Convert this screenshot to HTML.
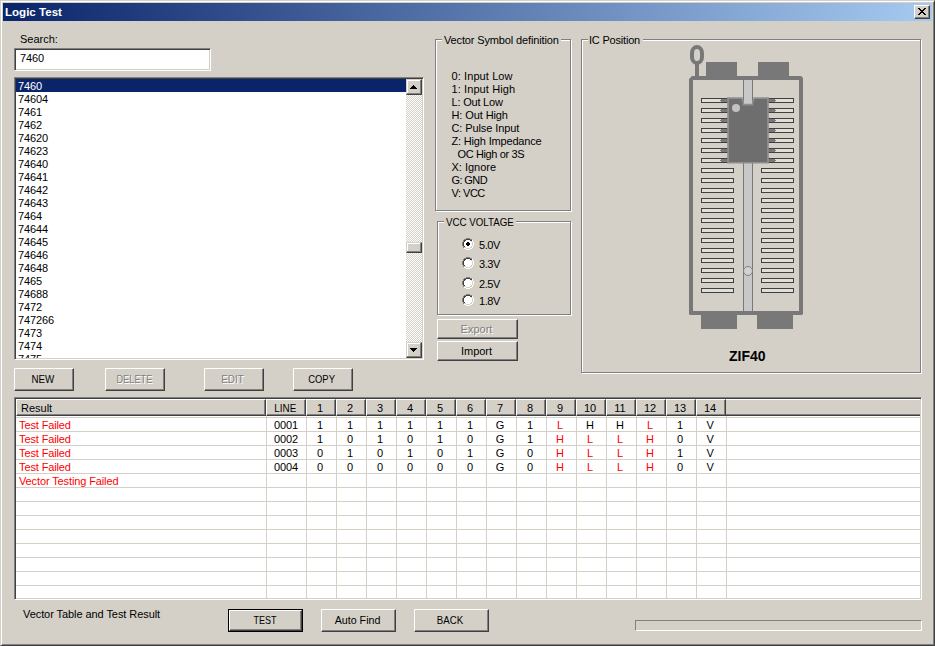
<!DOCTYPE html>
<html>
<head>
<meta charset="utf-8">
<title>Logic Test</title>
<style>
*{box-sizing:border-box;margin:0;padding:0}
html,body{width:935px;height:646px;overflow:hidden;background:#d4d0c8}
body{position:relative;font-family:"Liberation Sans",sans-serif;font-size:11px;color:#000;line-height:13px}
.abs{position:absolute}
#win{position:absolute;left:0;top:0;width:935px;height:646px;background:#d4d0c8;
 border:1px solid;border-color:#d4d0c8 #404040 #404040 #d4d0c8;
 box-shadow:inset 1px 1px 0 #fff, inset -1px -1px 0 #808080}
#title{position:absolute;left:3px;top:3px;width:929px;height:18px;
 background:linear-gradient(to right,#0a246a 0%,#a6caf0 100%);color:#fff;font-weight:bold;font-size:11px;line-height:18px}
#title span{position:absolute;left:2px;top:0;transform:scaleX(1.05);transform-origin:0 50%}
.btn{position:absolute;background:#d4d0c8;border:1px solid;border-color:#fff #404040 #404040 #fff;
 box-shadow:inset -1px -1px 0 #808080, inset 1px 1px 0 #d4d0c8;text-align:center;white-space:nowrap}
.btn.sb{border-color:#d4d0c8 #404040 #404040 #d4d0c8;box-shadow:inset -1px -1px 0 #808080, inset 1px 1px 0 #fff}
.btn.dis{color:#808080;text-shadow:1px 1px 0 #fff}
.sunken{position:absolute;background:#fff;border:1px solid;border-color:#808080 #fff #fff #808080;
 box-shadow:inset 1px 1px 0 #404040, inset -1px -1px 0 #d4d0c8}
.grp{position:absolute;border:1px solid #808080;box-shadow:1px 1px 0 #fff, inset 1px 1px 0 #fff}
.grp .lg{position:absolute;top:-6px;background:#d4d0c8;padding:0 2px;white-space:nowrap;line-height:13px}
#lbi{position:absolute;left:1px;top:1px;width:390px;height:279px;overflow:hidden}
#lbi div{letter-spacing:-0.12px;height:13px;line-height:15px;padding-left:2px;white-space:nowrap;overflow:hidden}
#lbi .sel{background:#0a246a;color:#fff}
#sb{position:absolute;left:391px;top:1px;width:16px;height:279px;
 background-color:#fff;background-image:conic-gradient(#fff 25%,#d4d0c8 0 50%,#fff 0 75%,#d4d0c8 0);background-size:2px 2px}
.hd{line-height:15px;padding-top:1px;padding-right:2px;overflow:hidden}
.hd2{position:absolute;background:#d4d0c8;border-top:1px solid #fff;border-bottom:1px solid #404040;box-shadow:inset 0 -1px 0 #808080}
.hl{position:absolute;left:0;width:904px;height:1px;background:#d4d0c8}
.vl{position:absolute;top:17px;width:1px;height:182px;background:#d4d0c8}
.c{position:absolute;letter-spacing:-0.12px;padding-right:2px;height:14px;line-height:14px;text-align:center;white-space:nowrap}
.red{color:#ff0000}
.sx{display:inline-block}
.t{position:absolute;white-space:nowrap}
</style>
</head>
<body>
<div id="win"></div>
<div id="title"><span>Logic Test</span></div>
<!-- close button -->
<div class="btn" style="left:914px;top:5px;width:16px;height:14px"></div>
<svg class="abs" style="left:918px;top:8px" width="8" height="7" viewBox="0 0 8 7"><path d="M0 0h2v1h1v1h2v-1h1v-1h2v1h-1v1h-1v1h-1v1h1v1h1v1h1v1h-2v-1h-1v-1h-2v1h-1v1h-2v-1h1v-1h1v-1h1v-1h-1v-1h-1v-1h-1z" fill="#000"/></svg>

<div class="t" style="left:20px;top:33px">Search:</div>
<div class="sunken" style="left:14px;top:48px;width:197px;height:23px"></div>
<div class="t" style="left:20px;top:52px;letter-spacing:-0.12px">7460</div>

<!-- listbox -->
<div class="sunken" id="lb" style="left:14px;top:77px;width:410px;height:283px;overflow:hidden">
<div id="lbi"><div class="sel">7460</div><div>74604</div><div>7461</div><div>7462</div><div>74620</div><div>74623</div><div>74640</div><div>74641</div><div>74642</div><div>74643</div><div>7464</div><div>74644</div><div>74645</div><div>74646</div><div>74648</div><div>7465</div><div>74688</div><div>7472</div><div>747266</div><div>7473</div><div>7474</div><div>7475</div></div>
<div id="sb">
 <div class="btn sb" style="left:0;top:0;width:16px;height:16px"></div>
 <svg class="abs" style="left:4px;top:6px" width="7" height="4" viewBox="0 0 7 4"><path d="M3 0h1v1h1v1h1v1h1v1h-7v-1h1v-1h1v-1h1z" fill="#000"/></svg>
 <div class="btn sb" style="left:0;top:163px;width:16px;height:11px"></div>
 <div class="btn sb" style="left:0;top:263px;width:16px;height:16px"></div>
 <svg class="abs" style="left:4px;top:269px" width="7" height="4" viewBox="0 0 7 4"><path d="M0 0h7v1h-1v1h-1v1h-1v1h-1v-1h-1v-1h-1v-1h-1z" fill="#000"/></svg>
</div>
</div>

<!-- buttons row -->
<div class="btn" style="left:14px;top:368px;width:60px;height:23px;line-height:21px;padding-right:3px"><span class="sx" style="transform:scaleX(.89)">NEW</span></div>
<div class="btn dis" style="left:105px;top:368px;width:60px;height:23px;line-height:21px;padding-right:2px"><span class="sx" style="transform:scaleX(.84)">DELETE</span></div>
<div class="btn dis" style="left:204px;top:368px;width:60px;height:23px;line-height:21px;padding-right:3px"><span class="sx" style="transform:scaleX(.9)">EDIT</span></div>
<div class="btn" style="left:293px;top:368px;width:60px;height:23px;line-height:21px;padding-right:2px"><span class="sx" style="transform:scaleX(.855)">COPY</span></div>

<!-- Vector Symbol definition -->
<div class="grp" style="left:435px;top:39px;width:136px;height:172px"><span class="lg" style="left:6px;letter-spacing:-0.14px">Vector Symbol definition</span></div>
<div class="t" style="left:451.5px;top:70px;letter-spacing:0.1px">0: Input Low</div>
<div class="t" style="left:451.5px;top:83px;letter-spacing:0.1px">1: Input High</div>
<div class="t" style="left:451.5px;top:96px;letter-spacing:-0.2px">L: Out Low</div>
<div class="t" style="left:451.5px;top:109px;letter-spacing:-0.1px">H: Out High</div>
<div class="t" style="left:451.5px;top:122px;letter-spacing:-0.1px">C: Pulse Input</div>
<div class="t" style="left:451.5px;top:135px;letter-spacing:-0.17px">Z: High Impedance</div>
<div class="t" style="left:457.5px;top:148px;letter-spacing:-0.37px">OC High or 3S</div>
<div class="t" style="left:451.5px;top:161px;letter-spacing:0px">X: Ignore</div>
<div class="t" style="left:451.5px;top:174px;letter-spacing:-0.6px">G: GND</div>
<div class="t" style="left:451.5px;top:187px;letter-spacing:-0.5px">V: VCC</div>

<!-- VCC VOLTAGE -->
<div class="grp" style="left:437px;top:221px;width:134px;height:94px"><span class="lg" style="left:6px;width:72px"><span class="sx" style="transform:scaleX(.885);transform-origin:0 50%">VCC VOLTAGE</span></span></div>
<svg class="abs" style="left:462px;top:238px" width="12" height="12" viewBox="0 0 12 12" shape-rendering="crispEdges"><rect x="4" y="0" width="4" height="1" fill="#808080"/><rect x="2" y="1" width="2" height="1" fill="#808080"/><rect x="4" y="1" width="4" height="1" fill="#404040"/><rect x="8" y="1" width="2" height="1" fill="#808080"/><rect x="1" y="2" width="1" height="1" fill="#808080"/><rect x="2" y="2" width="2" height="1" fill="#404040"/><rect x="4" y="2" width="4" height="1" fill="#ffffff"/><rect x="8" y="2" width="2" height="1" fill="#404040"/><rect x="10" y="2" width="1" height="1" fill="#ffffff"/><rect x="1" y="3" width="1" height="1" fill="#808080"/><rect x="2" y="3" width="1" height="1" fill="#404040"/><rect x="3" y="3" width="6" height="1" fill="#ffffff"/><rect x="9" y="3" width="1" height="1" fill="#d4d0c8"/><rect x="10" y="3" width="1" height="1" fill="#ffffff"/><rect x="0" y="4" width="1" height="1" fill="#808080"/><rect x="1" y="4" width="1" height="1" fill="#404040"/><rect x="2" y="4" width="8" height="1" fill="#ffffff"/><rect x="10" y="4" width="1" height="1" fill="#d4d0c8"/><rect x="11" y="4" width="1" height="1" fill="#ffffff"/><rect x="0" y="5" width="1" height="1" fill="#808080"/><rect x="1" y="5" width="1" height="1" fill="#404040"/><rect x="2" y="5" width="8" height="1" fill="#ffffff"/><rect x="10" y="5" width="1" height="1" fill="#d4d0c8"/><rect x="11" y="5" width="1" height="1" fill="#ffffff"/><rect x="0" y="6" width="1" height="1" fill="#808080"/><rect x="1" y="6" width="1" height="1" fill="#404040"/><rect x="2" y="6" width="8" height="1" fill="#ffffff"/><rect x="10" y="6" width="1" height="1" fill="#d4d0c8"/><rect x="11" y="6" width="1" height="1" fill="#ffffff"/><rect x="0" y="7" width="1" height="1" fill="#808080"/><rect x="1" y="7" width="1" height="1" fill="#404040"/><rect x="2" y="7" width="8" height="1" fill="#ffffff"/><rect x="10" y="7" width="1" height="1" fill="#d4d0c8"/><rect x="11" y="7" width="1" height="1" fill="#ffffff"/><rect x="1" y="8" width="1" height="1" fill="#808080"/><rect x="2" y="8" width="1" height="1" fill="#404040"/><rect x="3" y="8" width="6" height="1" fill="#ffffff"/><rect x="9" y="8" width="1" height="1" fill="#d4d0c8"/><rect x="10" y="8" width="1" height="1" fill="#ffffff"/><rect x="1" y="9" width="1" height="1" fill="#808080"/><rect x="2" y="9" width="2" height="1" fill="#d4d0c8"/><rect x="4" y="9" width="4" height="1" fill="#ffffff"/><rect x="8" y="9" width="2" height="1" fill="#d4d0c8"/><rect x="10" y="9" width="1" height="1" fill="#ffffff"/><rect x="2" y="10" width="2" height="1" fill="#ffffff"/><rect x="4" y="10" width="4" height="1" fill="#d4d0c8"/><rect x="8" y="10" width="2" height="1" fill="#ffffff"/><rect x="4" y="11" width="4" height="1" fill="#ffffff"/><rect x="5" y="4" width="2" height="4" fill="#000"/><rect x="4" y="5" width="4" height="2" fill="#000"/></svg>
<svg class="abs" style="left:462px;top:257px" width="12" height="12" viewBox="0 0 12 12" shape-rendering="crispEdges"><rect x="4" y="0" width="4" height="1" fill="#808080"/><rect x="2" y="1" width="2" height="1" fill="#808080"/><rect x="4" y="1" width="4" height="1" fill="#404040"/><rect x="8" y="1" width="2" height="1" fill="#808080"/><rect x="1" y="2" width="1" height="1" fill="#808080"/><rect x="2" y="2" width="2" height="1" fill="#404040"/><rect x="4" y="2" width="4" height="1" fill="#ffffff"/><rect x="8" y="2" width="2" height="1" fill="#404040"/><rect x="10" y="2" width="1" height="1" fill="#ffffff"/><rect x="1" y="3" width="1" height="1" fill="#808080"/><rect x="2" y="3" width="1" height="1" fill="#404040"/><rect x="3" y="3" width="6" height="1" fill="#ffffff"/><rect x="9" y="3" width="1" height="1" fill="#d4d0c8"/><rect x="10" y="3" width="1" height="1" fill="#ffffff"/><rect x="0" y="4" width="1" height="1" fill="#808080"/><rect x="1" y="4" width="1" height="1" fill="#404040"/><rect x="2" y="4" width="8" height="1" fill="#ffffff"/><rect x="10" y="4" width="1" height="1" fill="#d4d0c8"/><rect x="11" y="4" width="1" height="1" fill="#ffffff"/><rect x="0" y="5" width="1" height="1" fill="#808080"/><rect x="1" y="5" width="1" height="1" fill="#404040"/><rect x="2" y="5" width="8" height="1" fill="#ffffff"/><rect x="10" y="5" width="1" height="1" fill="#d4d0c8"/><rect x="11" y="5" width="1" height="1" fill="#ffffff"/><rect x="0" y="6" width="1" height="1" fill="#808080"/><rect x="1" y="6" width="1" height="1" fill="#404040"/><rect x="2" y="6" width="8" height="1" fill="#ffffff"/><rect x="10" y="6" width="1" height="1" fill="#d4d0c8"/><rect x="11" y="6" width="1" height="1" fill="#ffffff"/><rect x="0" y="7" width="1" height="1" fill="#808080"/><rect x="1" y="7" width="1" height="1" fill="#404040"/><rect x="2" y="7" width="8" height="1" fill="#ffffff"/><rect x="10" y="7" width="1" height="1" fill="#d4d0c8"/><rect x="11" y="7" width="1" height="1" fill="#ffffff"/><rect x="1" y="8" width="1" height="1" fill="#808080"/><rect x="2" y="8" width="1" height="1" fill="#404040"/><rect x="3" y="8" width="6" height="1" fill="#ffffff"/><rect x="9" y="8" width="1" height="1" fill="#d4d0c8"/><rect x="10" y="8" width="1" height="1" fill="#ffffff"/><rect x="1" y="9" width="1" height="1" fill="#808080"/><rect x="2" y="9" width="2" height="1" fill="#d4d0c8"/><rect x="4" y="9" width="4" height="1" fill="#ffffff"/><rect x="8" y="9" width="2" height="1" fill="#d4d0c8"/><rect x="10" y="9" width="1" height="1" fill="#ffffff"/><rect x="2" y="10" width="2" height="1" fill="#ffffff"/><rect x="4" y="10" width="4" height="1" fill="#d4d0c8"/><rect x="8" y="10" width="2" height="1" fill="#ffffff"/><rect x="4" y="11" width="4" height="1" fill="#ffffff"/></svg>
<svg class="abs" style="left:462px;top:277px" width="12" height="12" viewBox="0 0 12 12" shape-rendering="crispEdges"><rect x="4" y="0" width="4" height="1" fill="#808080"/><rect x="2" y="1" width="2" height="1" fill="#808080"/><rect x="4" y="1" width="4" height="1" fill="#404040"/><rect x="8" y="1" width="2" height="1" fill="#808080"/><rect x="1" y="2" width="1" height="1" fill="#808080"/><rect x="2" y="2" width="2" height="1" fill="#404040"/><rect x="4" y="2" width="4" height="1" fill="#ffffff"/><rect x="8" y="2" width="2" height="1" fill="#404040"/><rect x="10" y="2" width="1" height="1" fill="#ffffff"/><rect x="1" y="3" width="1" height="1" fill="#808080"/><rect x="2" y="3" width="1" height="1" fill="#404040"/><rect x="3" y="3" width="6" height="1" fill="#ffffff"/><rect x="9" y="3" width="1" height="1" fill="#d4d0c8"/><rect x="10" y="3" width="1" height="1" fill="#ffffff"/><rect x="0" y="4" width="1" height="1" fill="#808080"/><rect x="1" y="4" width="1" height="1" fill="#404040"/><rect x="2" y="4" width="8" height="1" fill="#ffffff"/><rect x="10" y="4" width="1" height="1" fill="#d4d0c8"/><rect x="11" y="4" width="1" height="1" fill="#ffffff"/><rect x="0" y="5" width="1" height="1" fill="#808080"/><rect x="1" y="5" width="1" height="1" fill="#404040"/><rect x="2" y="5" width="8" height="1" fill="#ffffff"/><rect x="10" y="5" width="1" height="1" fill="#d4d0c8"/><rect x="11" y="5" width="1" height="1" fill="#ffffff"/><rect x="0" y="6" width="1" height="1" fill="#808080"/><rect x="1" y="6" width="1" height="1" fill="#404040"/><rect x="2" y="6" width="8" height="1" fill="#ffffff"/><rect x="10" y="6" width="1" height="1" fill="#d4d0c8"/><rect x="11" y="6" width="1" height="1" fill="#ffffff"/><rect x="0" y="7" width="1" height="1" fill="#808080"/><rect x="1" y="7" width="1" height="1" fill="#404040"/><rect x="2" y="7" width="8" height="1" fill="#ffffff"/><rect x="10" y="7" width="1" height="1" fill="#d4d0c8"/><rect x="11" y="7" width="1" height="1" fill="#ffffff"/><rect x="1" y="8" width="1" height="1" fill="#808080"/><rect x="2" y="8" width="1" height="1" fill="#404040"/><rect x="3" y="8" width="6" height="1" fill="#ffffff"/><rect x="9" y="8" width="1" height="1" fill="#d4d0c8"/><rect x="10" y="8" width="1" height="1" fill="#ffffff"/><rect x="1" y="9" width="1" height="1" fill="#808080"/><rect x="2" y="9" width="2" height="1" fill="#d4d0c8"/><rect x="4" y="9" width="4" height="1" fill="#ffffff"/><rect x="8" y="9" width="2" height="1" fill="#d4d0c8"/><rect x="10" y="9" width="1" height="1" fill="#ffffff"/><rect x="2" y="10" width="2" height="1" fill="#ffffff"/><rect x="4" y="10" width="4" height="1" fill="#d4d0c8"/><rect x="8" y="10" width="2" height="1" fill="#ffffff"/><rect x="4" y="11" width="4" height="1" fill="#ffffff"/></svg>
<svg class="abs" style="left:462px;top:294px" width="12" height="12" viewBox="0 0 12 12" shape-rendering="crispEdges"><rect x="4" y="0" width="4" height="1" fill="#808080"/><rect x="2" y="1" width="2" height="1" fill="#808080"/><rect x="4" y="1" width="4" height="1" fill="#404040"/><rect x="8" y="1" width="2" height="1" fill="#808080"/><rect x="1" y="2" width="1" height="1" fill="#808080"/><rect x="2" y="2" width="2" height="1" fill="#404040"/><rect x="4" y="2" width="4" height="1" fill="#ffffff"/><rect x="8" y="2" width="2" height="1" fill="#404040"/><rect x="10" y="2" width="1" height="1" fill="#ffffff"/><rect x="1" y="3" width="1" height="1" fill="#808080"/><rect x="2" y="3" width="1" height="1" fill="#404040"/><rect x="3" y="3" width="6" height="1" fill="#ffffff"/><rect x="9" y="3" width="1" height="1" fill="#d4d0c8"/><rect x="10" y="3" width="1" height="1" fill="#ffffff"/><rect x="0" y="4" width="1" height="1" fill="#808080"/><rect x="1" y="4" width="1" height="1" fill="#404040"/><rect x="2" y="4" width="8" height="1" fill="#ffffff"/><rect x="10" y="4" width="1" height="1" fill="#d4d0c8"/><rect x="11" y="4" width="1" height="1" fill="#ffffff"/><rect x="0" y="5" width="1" height="1" fill="#808080"/><rect x="1" y="5" width="1" height="1" fill="#404040"/><rect x="2" y="5" width="8" height="1" fill="#ffffff"/><rect x="10" y="5" width="1" height="1" fill="#d4d0c8"/><rect x="11" y="5" width="1" height="1" fill="#ffffff"/><rect x="0" y="6" width="1" height="1" fill="#808080"/><rect x="1" y="6" width="1" height="1" fill="#404040"/><rect x="2" y="6" width="8" height="1" fill="#ffffff"/><rect x="10" y="6" width="1" height="1" fill="#d4d0c8"/><rect x="11" y="6" width="1" height="1" fill="#ffffff"/><rect x="0" y="7" width="1" height="1" fill="#808080"/><rect x="1" y="7" width="1" height="1" fill="#404040"/><rect x="2" y="7" width="8" height="1" fill="#ffffff"/><rect x="10" y="7" width="1" height="1" fill="#d4d0c8"/><rect x="11" y="7" width="1" height="1" fill="#ffffff"/><rect x="1" y="8" width="1" height="1" fill="#808080"/><rect x="2" y="8" width="1" height="1" fill="#404040"/><rect x="3" y="8" width="6" height="1" fill="#ffffff"/><rect x="9" y="8" width="1" height="1" fill="#d4d0c8"/><rect x="10" y="8" width="1" height="1" fill="#ffffff"/><rect x="1" y="9" width="1" height="1" fill="#808080"/><rect x="2" y="9" width="2" height="1" fill="#d4d0c8"/><rect x="4" y="9" width="4" height="1" fill="#ffffff"/><rect x="8" y="9" width="2" height="1" fill="#d4d0c8"/><rect x="10" y="9" width="1" height="1" fill="#ffffff"/><rect x="2" y="10" width="2" height="1" fill="#ffffff"/><rect x="4" y="10" width="4" height="1" fill="#d4d0c8"/><rect x="8" y="10" width="2" height="1" fill="#ffffff"/><rect x="4" y="11" width="4" height="1" fill="#ffffff"/></svg>
<div class="t" style="left:479px;top:239px;letter-spacing:-0.4px">5.0V</div>
<div class="t" style="left:479px;top:258px;letter-spacing:-0.4px">3.3V</div>
<div class="t" style="left:479px;top:278px;letter-spacing:-0.4px">2.5V</div>
<div class="t" style="left:479px;top:295px;letter-spacing:-0.4px">1.8V</div>
<div class="btn dis" style="left:437px;top:319px;width:81px;height:20px;line-height:18px;padding-right:2px">Export</div>
<div class="btn" style="left:437px;top:341px;width:81px;height:20px;line-height:18px;padding-right:2px">Import</div>

<!-- IC Position -->
<div class="grp" style="left:581px;top:39px;width:340px;height:334px"><span class="lg" style="left:6px;padding:0 3px 0 1px;letter-spacing:-0.2px">IC Position</span></div>
<svg class="abs" style="left:680px;top:40px" width="140" height="300" viewBox="680 40 140 300">
<rect x="692" y="47" width="10" height="16" rx="5" ry="6" fill="none" stroke="#787878" stroke-width="4"/>
<g shape-rendering="crispEdges">
<rect x="695" y="64" width="4" height="13" fill="#787878"/>
<rect x="706" y="62" width="31" height="14" fill="#787878"/>
<rect x="758" y="62" width="31" height="14" fill="#787878"/>
<rect x="701" y="315" width="36" height="14" fill="#787878"/>
<rect x="757" y="315" width="36" height="14" fill="#787878"/>
</g>
<path fill-rule="evenodd" fill="#787878" d="M692 76H801L803 78V314L802 315H690L689 314V79ZM693 80V311H799V80Z"/>
<g shape-rendering="crispEdges">
<rect x="743" y="80" width="10" height="231" fill="#787878"/>
<rect x="744" y="80" width="8" height="231" fill="#c8c8c8"/>
<rect x="701.5" y="98.5" width="32" height="4" fill="#e1ded8" stroke="#404040" stroke-width="1"/>
<rect x="761.5" y="98.5" width="32" height="4" fill="#e1ded8" stroke="#404040" stroke-width="1"/>
<rect x="701.5" y="108.5" width="32" height="4" fill="#e1ded8" stroke="#404040" stroke-width="1"/>
<rect x="761.5" y="108.5" width="32" height="4" fill="#e1ded8" stroke="#404040" stroke-width="1"/>
<rect x="701.5" y="118.5" width="32" height="4" fill="#e1ded8" stroke="#404040" stroke-width="1"/>
<rect x="761.5" y="118.5" width="32" height="4" fill="#e1ded8" stroke="#404040" stroke-width="1"/>
<rect x="701.5" y="128.5" width="32" height="4" fill="#e1ded8" stroke="#404040" stroke-width="1"/>
<rect x="761.5" y="128.5" width="32" height="4" fill="#e1ded8" stroke="#404040" stroke-width="1"/>
<rect x="701.5" y="138.5" width="32" height="4" fill="#e1ded8" stroke="#404040" stroke-width="1"/>
<rect x="761.5" y="138.5" width="32" height="4" fill="#e1ded8" stroke="#404040" stroke-width="1"/>
<rect x="701.5" y="148.5" width="32" height="4" fill="#e1ded8" stroke="#404040" stroke-width="1"/>
<rect x="761.5" y="148.5" width="32" height="4" fill="#e1ded8" stroke="#404040" stroke-width="1"/>
<rect x="701.5" y="158.5" width="32" height="4" fill="#e1ded8" stroke="#404040" stroke-width="1"/>
<rect x="761.5" y="158.5" width="32" height="4" fill="#e1ded8" stroke="#404040" stroke-width="1"/>
<rect x="701.5" y="168.5" width="32" height="4" fill="#e1ded8" stroke="#404040" stroke-width="1"/>
<rect x="761.5" y="168.5" width="32" height="4" fill="#e1ded8" stroke="#404040" stroke-width="1"/>
<rect x="701.5" y="178.5" width="32" height="4" fill="#e1ded8" stroke="#404040" stroke-width="1"/>
<rect x="761.5" y="178.5" width="32" height="4" fill="#e1ded8" stroke="#404040" stroke-width="1"/>
<rect x="701.5" y="188.5" width="32" height="4" fill="#e1ded8" stroke="#404040" stroke-width="1"/>
<rect x="761.5" y="188.5" width="32" height="4" fill="#e1ded8" stroke="#404040" stroke-width="1"/>
<rect x="701.5" y="198.5" width="32" height="4" fill="#e1ded8" stroke="#404040" stroke-width="1"/>
<rect x="761.5" y="198.5" width="32" height="4" fill="#e1ded8" stroke="#404040" stroke-width="1"/>
<rect x="701.5" y="208.5" width="32" height="4" fill="#e1ded8" stroke="#404040" stroke-width="1"/>
<rect x="761.5" y="208.5" width="32" height="4" fill="#e1ded8" stroke="#404040" stroke-width="1"/>
<rect x="701.5" y="218.5" width="32" height="4" fill="#e1ded8" stroke="#404040" stroke-width="1"/>
<rect x="761.5" y="218.5" width="32" height="4" fill="#e1ded8" stroke="#404040" stroke-width="1"/>
<rect x="701.5" y="228.5" width="32" height="4" fill="#e1ded8" stroke="#404040" stroke-width="1"/>
<rect x="761.5" y="228.5" width="32" height="4" fill="#e1ded8" stroke="#404040" stroke-width="1"/>
<rect x="701.5" y="238.5" width="32" height="4" fill="#e1ded8" stroke="#404040" stroke-width="1"/>
<rect x="761.5" y="238.5" width="32" height="4" fill="#e1ded8" stroke="#404040" stroke-width="1"/>
<rect x="701.5" y="248.5" width="32" height="4" fill="#e1ded8" stroke="#404040" stroke-width="1"/>
<rect x="761.5" y="248.5" width="32" height="4" fill="#e1ded8" stroke="#404040" stroke-width="1"/>
<rect x="701.5" y="258.5" width="32" height="4" fill="#e1ded8" stroke="#404040" stroke-width="1"/>
<rect x="761.5" y="258.5" width="32" height="4" fill="#e1ded8" stroke="#404040" stroke-width="1"/>
<rect x="701.5" y="268.5" width="32" height="4" fill="#e1ded8" stroke="#404040" stroke-width="1"/>
<rect x="761.5" y="268.5" width="32" height="4" fill="#e1ded8" stroke="#404040" stroke-width="1"/>
<rect x="701.5" y="278.5" width="32" height="4" fill="#e1ded8" stroke="#404040" stroke-width="1"/>
<rect x="761.5" y="278.5" width="32" height="4" fill="#e1ded8" stroke="#404040" stroke-width="1"/>
<rect x="701.5" y="288.5" width="32" height="4" fill="#e1ded8" stroke="#404040" stroke-width="1"/>
<rect x="761.5" y="288.5" width="32" height="4" fill="#e1ded8" stroke="#404040" stroke-width="1"/>
<rect x="721" y="99" width="7" height="3" fill="#787878"/><rect x="720" y="100" width="1" height="1" fill="#787878"/>
<rect x="768" y="99" width="7" height="3" fill="#787878"/><rect x="775" y="100" width="1" height="1" fill="#787878"/>
<rect x="721" y="109" width="7" height="3" fill="#787878"/><rect x="720" y="110" width="1" height="1" fill="#787878"/>
<rect x="768" y="109" width="7" height="3" fill="#787878"/><rect x="775" y="110" width="1" height="1" fill="#787878"/>
<rect x="721" y="119" width="7" height="3" fill="#787878"/><rect x="720" y="120" width="1" height="1" fill="#787878"/>
<rect x="768" y="119" width="7" height="3" fill="#787878"/><rect x="775" y="120" width="1" height="1" fill="#787878"/>
<rect x="721" y="129" width="7" height="3" fill="#787878"/><rect x="720" y="130" width="1" height="1" fill="#787878"/>
<rect x="768" y="129" width="7" height="3" fill="#787878"/><rect x="775" y="130" width="1" height="1" fill="#787878"/>
<rect x="721" y="139" width="7" height="3" fill="#787878"/><rect x="720" y="140" width="1" height="1" fill="#787878"/>
<rect x="768" y="139" width="7" height="3" fill="#787878"/><rect x="775" y="140" width="1" height="1" fill="#787878"/>
<rect x="721" y="149" width="7" height="3" fill="#787878"/><rect x="720" y="150" width="1" height="1" fill="#787878"/>
<rect x="768" y="149" width="7" height="3" fill="#787878"/><rect x="775" y="150" width="1" height="1" fill="#787878"/>
<rect x="721" y="159" width="7" height="3" fill="#787878"/><rect x="720" y="160" width="1" height="1" fill="#787878"/>
<rect x="768" y="159" width="7" height="3" fill="#787878"/><rect x="775" y="160" width="1" height="1" fill="#787878"/>
</g>
<path d="M727.2 97.2H742.3L744 101.6V103.7H752V101.6L753.7 97.2H768.8V163.6H727.2Z" fill="#8e8e8e"/>
<path d="M729 99H741.2L742.6 102.6V105.4H753.4V102.6L754.8 99H767.1V161.9H729Z" fill="#6e6e6e"/>
<g shape-rendering="crispEdges"><rect x="743" y="96" width="10" height="3" fill="#787878"/><rect x="744" y="96" width="8" height="6" fill="#c8c8c8"/></g>
<circle cx="736" cy="108" r="4" fill="#c2c2c2"/>
<circle cx="748" cy="271" r="4.5" fill="#d2d2d2" stroke="#808080" stroke-width="1"/>
</svg>
<div class="t" style="left:729px;top:348px;font-weight:bold;font-size:14px;line-height:16px">ZIF40</div>


<!-- result table -->
<div class="sunken" style="left:14px;top:397px;width:908px;height:203px"></div>
<div class="abs" id="tb" style="left:16px;top:399px;width:904px;height:199px;overflow:hidden"><div class="hl" style="top:18px"></div><div class="hl" style="top:32px"></div><div class="hl" style="top:46px"></div><div class="hl" style="top:60px"></div><div class="hl" style="top:74px"></div><div class="hl" style="top:88px"></div><div class="hl" style="top:102px"></div><div class="hl" style="top:116px"></div><div class="hl" style="top:130px"></div><div class="hl" style="top:144px"></div><div class="hl" style="top:158px"></div><div class="hl" style="top:172px"></div><div class="hl" style="top:186px"></div><div class="vl" style="left:250px"></div><div class="vl" style="left:290px"></div><div class="vl" style="left:320px"></div><div class="vl" style="left:350px"></div><div class="vl" style="left:380px"></div><div class="vl" style="left:410px"></div><div class="vl" style="left:440px"></div><div class="vl" style="left:470px"></div><div class="vl" style="left:500px"></div><div class="vl" style="left:530px"></div><div class="vl" style="left:560px"></div><div class="vl" style="left:590px"></div><div class="vl" style="left:620px"></div><div class="vl" style="left:650px"></div><div class="vl" style="left:680px"></div><div class="vl" style="left:710px"></div><div class="btn hd" style="left:0px;top:0;width:250px;height:17px;text-align:left;padding-left:4px;">Result</div><div class="btn hd" style="left:250px;top:0;width:40px;height:17px;"><span class="sx" style="transform:scaleX(.9)">LINE</span></div><div class="btn hd" style="left:290px;top:0;width:30px;height:17px;">1</div><div class="btn hd" style="left:320px;top:0;width:30px;height:17px;">2</div><div class="btn hd" style="left:350px;top:0;width:30px;height:17px;">3</div><div class="btn hd" style="left:380px;top:0;width:30px;height:17px;">4</div><div class="btn hd" style="left:410px;top:0;width:30px;height:17px;">5</div><div class="btn hd" style="left:440px;top:0;width:30px;height:17px;">6</div><div class="btn hd" style="left:470px;top:0;width:30px;height:17px;">7</div><div class="btn hd" style="left:500px;top:0;width:30px;height:17px;">8</div><div class="btn hd" style="left:530px;top:0;width:30px;height:17px;">9</div><div class="btn hd" style="left:560px;top:0;width:30px;height:17px;">10</div><div class="btn hd" style="left:590px;top:0;width:30px;height:17px;">11</div><div class="btn hd" style="left:620px;top:0;width:30px;height:17px;">12</div><div class="btn hd" style="left:650px;top:0;width:30px;height:17px;">13</div><div class="btn hd" style="left:680px;top:0;width:30px;height:17px;">14</div><div class="hd2" style="left:710px;top:0;width:194px;height:17px"></div><div class="c red" style="left:0;top:19px;width:250px;text-align:left;padding-left:3px">Test Failed</div><div class="c" style="left:250px;top:19px;width:40px;padding-right:0">0001</div><div class="c" style="left:290px;top:19px;width:30px">1</div><div class="c" style="left:320px;top:19px;width:30px">1</div><div class="c" style="left:350px;top:19px;width:30px">1</div><div class="c" style="left:380px;top:19px;width:30px">1</div><div class="c" style="left:410px;top:19px;width:30px">1</div><div class="c" style="left:440px;top:19px;width:30px">1</div><div class="c" style="left:470px;top:19px;width:30px">G</div><div class="c" style="left:500px;top:19px;width:30px">1</div><div class="c red" style="left:530px;top:19px;width:30px">L</div><div class="c" style="left:560px;top:19px;width:30px">H</div><div class="c" style="left:590px;top:19px;width:30px">H</div><div class="c red" style="left:620px;top:19px;width:30px">L</div><div class="c" style="left:650px;top:19px;width:30px">1</div><div class="c" style="left:680px;top:19px;width:30px">V</div><div class="c red" style="left:0;top:33px;width:250px;text-align:left;padding-left:3px">Test Failed</div><div class="c" style="left:250px;top:33px;width:40px;padding-right:0">0002</div><div class="c" style="left:290px;top:33px;width:30px">1</div><div class="c" style="left:320px;top:33px;width:30px">0</div><div class="c" style="left:350px;top:33px;width:30px">1</div><div class="c" style="left:380px;top:33px;width:30px">0</div><div class="c" style="left:410px;top:33px;width:30px">1</div><div class="c" style="left:440px;top:33px;width:30px">0</div><div class="c" style="left:470px;top:33px;width:30px">G</div><div class="c" style="left:500px;top:33px;width:30px">1</div><div class="c red" style="left:530px;top:33px;width:30px">H</div><div class="c red" style="left:560px;top:33px;width:30px">L</div><div class="c red" style="left:590px;top:33px;width:30px">L</div><div class="c red" style="left:620px;top:33px;width:30px">H</div><div class="c" style="left:650px;top:33px;width:30px">0</div><div class="c" style="left:680px;top:33px;width:30px">V</div><div class="c red" style="left:0;top:47px;width:250px;text-align:left;padding-left:3px">Test Failed</div><div class="c" style="left:250px;top:47px;width:40px;padding-right:0">0003</div><div class="c" style="left:290px;top:47px;width:30px">0</div><div class="c" style="left:320px;top:47px;width:30px">1</div><div class="c" style="left:350px;top:47px;width:30px">0</div><div class="c" style="left:380px;top:47px;width:30px">1</div><div class="c" style="left:410px;top:47px;width:30px">0</div><div class="c" style="left:440px;top:47px;width:30px">1</div><div class="c" style="left:470px;top:47px;width:30px">G</div><div class="c" style="left:500px;top:47px;width:30px">0</div><div class="c red" style="left:530px;top:47px;width:30px">H</div><div class="c red" style="left:560px;top:47px;width:30px">L</div><div class="c red" style="left:590px;top:47px;width:30px">L</div><div class="c red" style="left:620px;top:47px;width:30px">H</div><div class="c" style="left:650px;top:47px;width:30px">1</div><div class="c" style="left:680px;top:47px;width:30px">V</div><div class="c red" style="left:0;top:61px;width:250px;text-align:left;padding-left:3px">Test Failed</div><div class="c" style="left:250px;top:61px;width:40px;padding-right:0">0004</div><div class="c" style="left:290px;top:61px;width:30px">0</div><div class="c" style="left:320px;top:61px;width:30px">0</div><div class="c" style="left:350px;top:61px;width:30px">0</div><div class="c" style="left:380px;top:61px;width:30px">0</div><div class="c" style="left:410px;top:61px;width:30px">0</div><div class="c" style="left:440px;top:61px;width:30px">0</div><div class="c" style="left:470px;top:61px;width:30px">G</div><div class="c" style="left:500px;top:61px;width:30px">0</div><div class="c red" style="left:530px;top:61px;width:30px">H</div><div class="c red" style="left:560px;top:61px;width:30px">L</div><div class="c red" style="left:590px;top:61px;width:30px">L</div><div class="c red" style="left:620px;top:61px;width:30px">H</div><div class="c" style="left:650px;top:61px;width:30px">0</div><div class="c" style="left:680px;top:61px;width:30px">V</div><div class="c red" style="left:0;top:75px;width:250px;text-align:left;padding-left:3px">Vector Testing Failed</div></div>

<!-- bottom -->
<div class="t" style="left:23px;top:608px;letter-spacing:-0.07px">Vector Table and Test Result</div>
<div class="abs" style="left:228px;top:609px;width:75px;height:23px;border:1px solid #000"></div>
<div class="btn" style="left:229px;top:610px;width:73px;height:21px;line-height:19px;padding-right:1px"><span class="sx" style="transform:scaleX(.82)">TEST</span></div>
<div class="btn" style="left:321px;top:609px;width:75px;height:23px;line-height:21px;padding-right:2px"><span class="sx" style="transform:scaleX(.97)">Auto Find</span></div>
<div class="btn" style="left:414px;top:609px;width:75px;height:23px;line-height:21px;padding-right:3px"><span class="sx" style="transform:scaleX(.88)">BACK</span></div>
<div class="abs" style="left:635px;top:620px;width:287px;height:11px;border:1px solid;border-color:#808080 #fff #fff #808080"></div>

</body>
</html>
